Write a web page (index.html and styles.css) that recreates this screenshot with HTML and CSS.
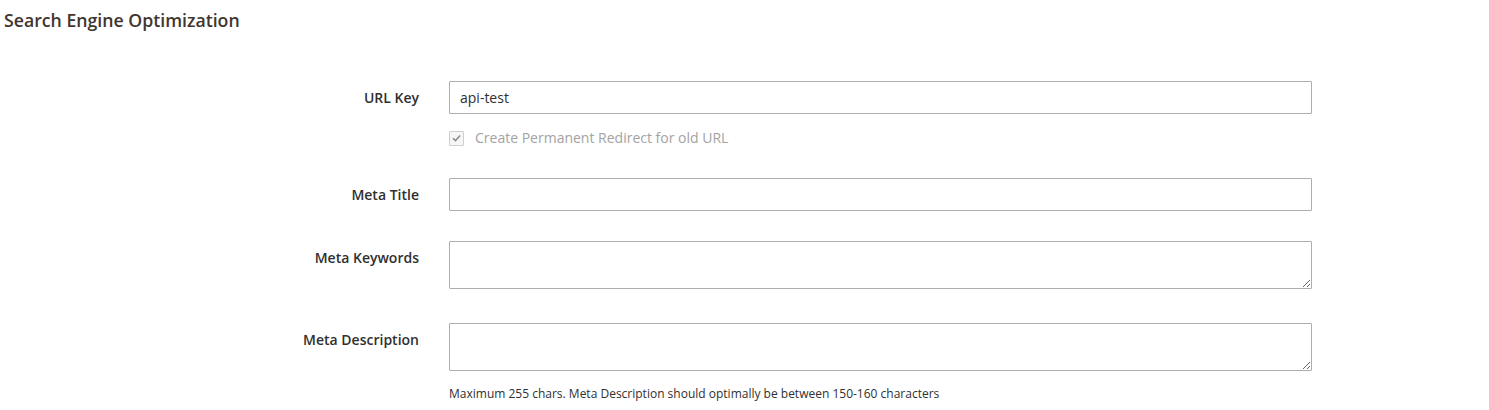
FILE: index.html
```html
<!DOCTYPE html>
<html lang="en">
<head>
<meta charset="utf-8">
<title>Search Engine Optimization</title>
<link rel="stylesheet" href="styles.css">
</head>
<body>
<div class="section">
  <h2 class="section-title">Search Engine Optimization</h2>
  <div class="form">
    <div class="field">
      <label class="field-label">URL Key</label>
      <div class="field-control">
        <input class="input" type="text" value="api-test">
        <div class="service">
          <span class="checkbox">
            <svg viewBox="0 0 14 14" width="14" height="14"><path d="M3.2 7.2 L5.9 9.8 L10.9 4.2" fill="none" stroke="#8a8a8a" stroke-width="1.6"/></svg>
          </span>
          <span class="service-label">Create Permanent Redirect for old URL</span>
        </div>
      </div>
    </div>
    <div class="field">
      <label class="field-label">Meta Title</label>
      <div class="field-control">
        <input class="input" type="text" value="">
      </div>
    </div>
    <div class="field field-wide">
      <label class="field-label">Meta Keywords</label>
      <div class="field-control">
        <textarea class="textarea"></textarea>
      </div>
    </div>
    <div class="field field-last">
      <label class="field-label">Meta Description</label>
      <div class="field-control">
        <textarea class="textarea"></textarea>
        <div class="note">Maximum 255 chars. Meta Description should optimally be between 150-160 characters</div>
      </div>
    </div>
  </div>
</div>
</body>
</html>
```

FILE: styles.css
```css
html, body {
  margin: 0;
  padding: 0;
  background: #ffffff;
}

body {
  font-family: "Open Sans", "Liberation Sans", sans-serif;
  color: #303030;
}

.section-title {
  margin: 0;
  padding: 9px 0 0 4px;
  font-size: 17.7px;
  line-height: 22px;
  font-weight: 600;
  color: #41362f;
}

.form {
  margin-top: 50px;
}

.field {
  display: grid;
  grid-template-columns: 419px 863px;
  column-gap: 30px;
  margin-bottom: 30px;
}

.field-wide {
  margin-bottom: 34px;
}

.field-last {
  margin-bottom: 0;
}

.field-label {
  text-align: right;
  font-size: 14px;
  font-weight: 600;
  line-height: 20px;
  padding-top: 7px;
  color: #303030;
}

.field-control {
  display: flex;
  flex-direction: column;
}

.input {
  box-sizing: border-box;
  width: 100%;
  height: 33px;
  margin: 0;
  border: 1px solid #adadad;
  border-radius: 1px;
  padding: 0 10px;
  font-family: "Open Sans", "Liberation Sans", sans-serif;
  font-size: 14px;
  color: #303030;
  background: #ffffff;
  outline: none;
}

.textarea {
  box-sizing: border-box;
  display: block;
  width: 100%;
  height: 48px;
  margin: 0;
  border: 1px solid #adadad;
  border-radius: 1px;
  padding: 6px 10px;
  font-family: "Open Sans", "Liberation Sans", sans-serif;
  font-size: 14px;
  color: #303030;
  background: #ffffff;
  resize: vertical;
  outline: none;
}

.service {
  display: flex;
  align-items: center;
  gap: 11px;
  margin-top: 14px;
  height: 20px;
}

.checkbox {
  box-sizing: border-box;
  width: 15px;
  height: 15px;
  border: 1px solid #cfcfcf;
  border-radius: 1px;
  background: #f6f6f6;
  display: flex;
  align-items: center;
  justify-content: center;
}

.checkbox svg {
  display: block;
}

.service-label {
  font-size: 14px;
  line-height: 20px;
  color: #a3a3a3;
}

.note {
  margin-top: 14px;
  font-size: 12px;
  line-height: 17px;
  color: #303030;
}
```
